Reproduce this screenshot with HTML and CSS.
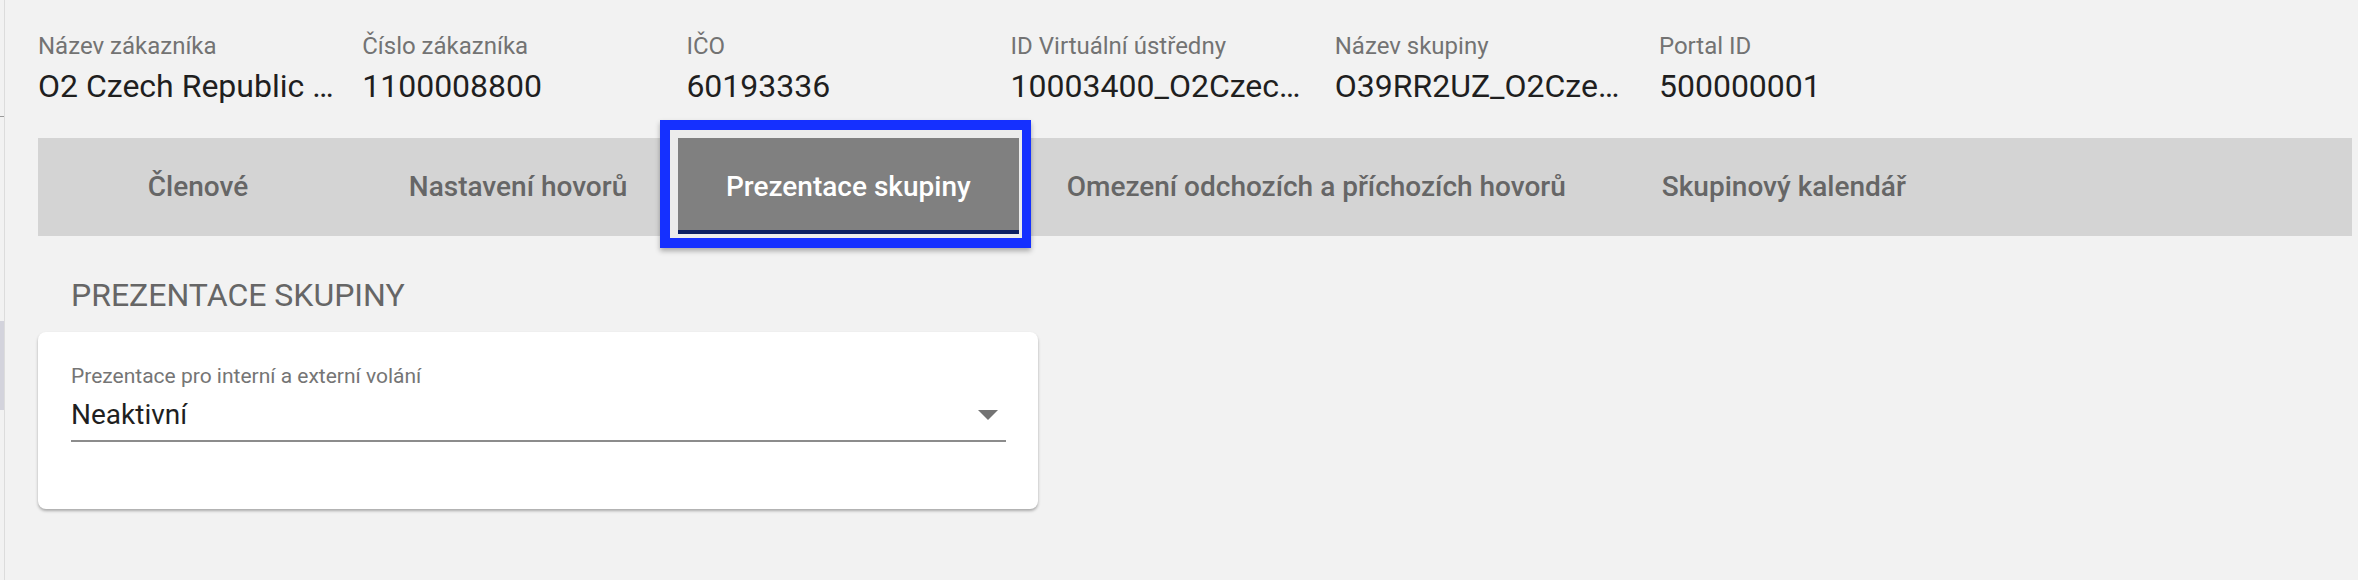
FILE: index.html
```html
<!DOCTYPE html>
<html lang="cs">
<head>
<meta charset="utf-8">
<title>Prezentace skupiny</title>
<link rel="stylesheet" href="styles.css">
</head>
<body>
<div class="page">
  <aside class="edge">
    <div class="edge-gap"></div>
    <div class="edge-tick"></div>
    <div class="edge-gap2"></div>
    <div class="edge-block"></div>
  </aside>
  <main class="main">
    <section class="info">
      <div class="info-col"><div class="info-label">Název zákazníka</div><div class="info-value">O2 Czech Republic a.s.</div></div>
      <div class="info-col"><div class="info-label">Číslo zákazníka</div><div class="info-value">1100008800</div></div>
      <div class="info-col"><div class="info-label">IČO</div><div class="info-value">60193336</div></div>
      <div class="info-col"><div class="info-label">ID Virtuální ústředny</div><div class="info-value">10003400_O2CzechRepublic</div></div>
      <div class="info-col"><div class="info-label">Název skupiny</div><div class="info-value">O39RR2UZ_O2CzechRepublic</div></div>
      <div class="info-col"><div class="info-label">Portal ID</div><div class="info-value">500000001</div></div>
    </section>
    <nav class="tabs">
      <div class="tab">Členové</div>
      <div class="tab">Nastavení hovorů</div>
      <div class="tab tab-active">Prezentace skupiny</div>
      <div class="tab">Omezení odchozích a příchozích hovorů</div>
      <div class="tab">Skupinový kalendář</div>
    </nav>
    <h2 class="section-title">PREZENTACE SKUPINY</h2>
    <div class="card">
      <div class="field">
        <div class="field-label">Prezentace pro interní a externí volání</div>
        <div class="select">
          <span class="select-value">Neaktivní</span>
          <span class="select-arrow"></span>
        </div>
      </div>
    </div>
  </main>
</div>
</body>
</html>
```

FILE: styles.css
```css
* { box-sizing: border-box; }
html, body {
  margin: 0;
  padding: 0;
  background: #f2f2f2;
  font-family: Roboto, "Liberation Sans", Arial, sans-serif;
}
.page {
  display: flex;
  min-height: 580px;
}
.edge {
  width: 5px;
  flex: 0 0 5px;
  border-right: 1px solid #dcdcdc;
  display: flex;
  flex-direction: column;
}
.edge-gap { height: 116px; }
.edge-tick { height: 1px; background: #9a9a9a; }
.edge-gap2 { height: 204px; }
.edge-block { height: 89px; background: #d3d3dc; }

.main {
  flex: 1;
  padding: 30px 6px 0 33px;
}
.info {
  display: grid;
  grid-template-columns: repeat(6, 324.2px);
}
.info-col {
  padding-right: 26px;
  min-width: 0;
}
.info-label {
  font-size: 24px;
  line-height: 32px;
  color: #737373;
  white-space: nowrap;
}
.info-value {
  margin-top: 4px;
  font-size: 32px;
  line-height: 40px;
  color: #1f1f1f;
  white-space: nowrap;
  overflow: hidden;
  text-overflow: ellipsis;
}

.tabs {
  margin-top: 32px;
  height: 98px;
  background: #d4d4d4;
  display: flex;
}
.tab {
  position: relative;
  min-width: 320px;
  padding: 0 48px;
  text-align: center;
  font-size: 28px;
  font-weight: 500;
  line-height: 98px;
  color: #666666;
  white-space: nowrap;
}
.tab-active {
  color: #ffffff;
  background: linear-gradient(to top, #ececec 0, #ececec 2px, #0b1f63 2px, #0b1f63 6px, #808080 6px);
}
.tab-active::before {
  content: "";
  position: absolute;
  top: -8px;
  left: -8px;
  right: -3px;
  bottom: -2px;
  border-style: solid;
  border-color: #ececec;
  border-width: 8px 3px 2px 8px;
}
.tab-active::after {
  content: "";
  position: absolute;
  top: -18px;
  left: -18px;
  right: -12px;
  bottom: -12px;
  border: 10px solid #1530ff;
  border-right-width: 9px;
  box-shadow: 0 3px 5px rgba(0, 0, 0, 0.3);
}

.section-title {
  margin: 39px 0 17px 33px;
  font-size: 32px;
  line-height: 40px;
  font-weight: 400;
  color: #666666;
}
.card {
  width: 1000px;
  height: 177px;
  background: #ffffff;
  border-radius: 8px;
  box-shadow: 0 2px 3px rgba(0, 0, 0, 0.3);
  padding: 30px 32px 0 33px;
}
.field-label {
  font-size: 21px;
  line-height: 28px;
  color: #757575;
}
.select {
  margin-top: 7px;
  display: flex;
  align-items: center;
  justify-content: space-between;
  padding-bottom: 7px;
  border-bottom: 2.5px solid #8c8c8c;
}
.select-value {
  font-size: 28px;
  line-height: 36px;
  color: #1f1f1f;
}
.select-arrow {
  width: 0;
  height: 0;
  margin-right: 8px;
  border-left: 10px solid transparent;
  border-right: 10px solid transparent;
  border-top: 10px solid #737373;
}
```
